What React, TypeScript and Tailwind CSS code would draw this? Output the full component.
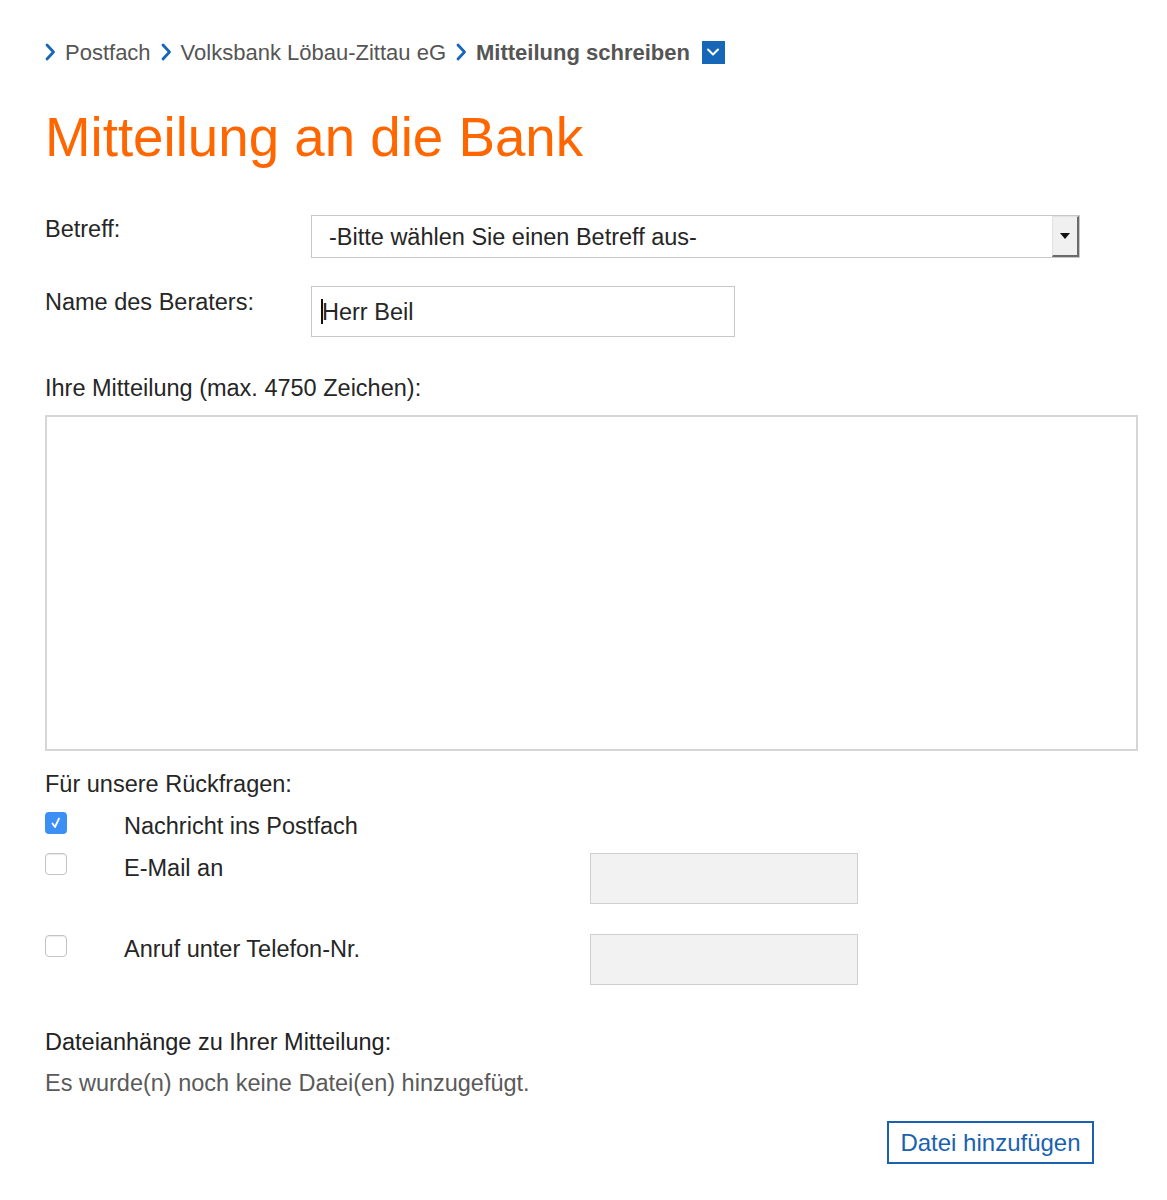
import React from "react";

const Chevron = () => (
  <svg width="11" height="18" viewBox="0 0 11 18" className="shrink-0">
    <path d="M2 2 L8.5 9 L2 16" fill="none" stroke="#1767b8" strokeWidth="2.8" strokeLinecap="round" strokeLinejoin="round" />
  </svg>
);

const Checkbox = ({ checked }: { checked?: boolean }) =>
  checked ? (
    <div className="w-[22px] h-[22px] rounded-[4px] bg-[#3b8ff5] flex items-center justify-center shrink-0">
      <svg width="16" height="16" viewBox="0 0 16 16" className="shrink-0">
        <path d="M4.5 8.5 L7 12 L11 3.5" fill="none" stroke="#fff" strokeWidth="1.8" strokeLinecap="round" strokeLinejoin="round" />
      </svg>
    </div>
  ) : (
    <div className="w-[22px] h-[22px] rounded-[4px] border border-[#c4c4c4] bg-white shadow-[inset_0_1px_1px_rgba(0,0,0,0.08)] shrink-0" />
  );

export default function App() {
  return (
    <div
      className="min-h-[1200px] bg-white pl-[45px] pr-[29px] pt-[38px] text-[#262626]"
      style={{ fontFamily: '"Liberation Sans", Arial, sans-serif' }}
    >
      {/* Breadcrumb */}
      <nav className="flex items-center h-[28px] text-[22px] text-[#555]">
        <Chevron />
        <span className="ml-[9px]">Postfach</span>
        <span className="ml-[10px]"><Chevron /></span>
        <span className="ml-[9px]">Volksbank Löbau-Zittau eG</span>
        <span className="ml-[10px]"><Chevron /></span>
        <span className="ml-[9px] font-bold">Mitteilung schreiben</span>
        <span className="ml-[12px] w-[23px] h-[23px] bg-[#1767b8] flex items-center justify-center">
          <svg width="14" height="10" viewBox="0 0 14 10">
            <path d="M2 2.5 L7 7.5 L12 2.5" fill="none" stroke="#fff" strokeWidth="2" strokeLinecap="round" strokeLinejoin="round" />
          </svg>
        </span>
      </nav>

      <h1 className="mt-[39px] text-[54.7px] leading-[64px] text-[#ff6600]">Mitteilung an die Bank</h1>

      {/* Betreff */}
      <div className="mt-[46px] flex items-start text-[23.5px] leading-[28px]">
        <label className="w-[266px]">Betreff:</label>
        <div className="w-[769px] h-[43px] border border-[#c8c8c8] flex items-stretch">
          <span className="flex-1 pl-[17px] flex items-center">-Bitte wählen Sie einen Betreff aus-</span>
          <span className="w-[27px] bg-[#f0f0f0] border-l border-t border-[#e2e2e2] border-r-2 border-b-2 border-r-[#6b6b6b] border-b-[#6b6b6b] flex items-center justify-center">
            <svg width="10" height="6" viewBox="0 0 10 6">
              <path d="M0 0 H10 L5 6 Z" fill="#111" />
            </svg>
          </span>
        </div>
      </div>

      {/* Berater */}
      <div className="mt-[28px] flex items-start text-[23.5px] leading-[28px]">
        <label className="w-[266px] pt-[2px]">Name des Beraters:</label>
        <div className="w-[424px] h-[51px] border border-[#c8c8c8] flex items-center pl-[9px]">
          <span className="w-[2px] h-[25px] bg-[#111] mr-[-1px]" />
          <span>Herr Beil</span>
        </div>
      </div>

      <p className="mt-[37px] text-[23.5px] leading-[28px]">Ihre Mitteilung (max. 4750 Zeichen):</p>
      <div className="mt-[13px] h-[336px] border-2 border-[#d6d6d6] bg-white" />

      <p className="mt-[19px] text-[23.5px] leading-[28px]">Für unsere Rückfragen:</p>

      <div className="mt-[14px] flex items-start text-[23.5px] leading-[28px]">
        <Checkbox checked />
        <span className="ml-[57px]">Nachricht ins Postfach</span>
      </div>

      <div className="mt-[13px] flex items-start text-[23.5px] leading-[28px]">
        <Checkbox />
        <span className="ml-[57px] w-[466px] pt-[1px]">E-Mail an</span>
        <div className="w-[268px] h-[51px] border border-[#cfcfcf] bg-[#f2f2f2]" />
      </div>

      <div className="mt-[30px] flex items-start text-[23.5px] leading-[28px]">
        <div className="pt-[1px]"><Checkbox /></div>
        <span className="ml-[57px] w-[466px] pt-[1px]">Anruf unter Telefon-Nr.</span>
        <div className="w-[268px] h-[51px] border border-[#cfcfcf] bg-[#f2f2f2]" />
      </div>

      <p className="mt-[43px] text-[23.5px] leading-[28px] text-[#222]">Dateianhänge zu Ihrer Mitteilung:</p>
      <p className="mt-[13px] text-[23.5px] leading-[28px] text-[#5a5a5a]">Es wurde(n) noch keine Datei(en) hinzugefügt.</p>

      <div className="mt-[24px] flex justify-end pr-[44px]">
        <button className="w-[207px] h-[43px] border-2 border-[#1a62b0] text-[#1a62b0] text-[24px] leading-none">
          Datei hinzufügen
        </button>
      </div>
    </div>
  );
}
